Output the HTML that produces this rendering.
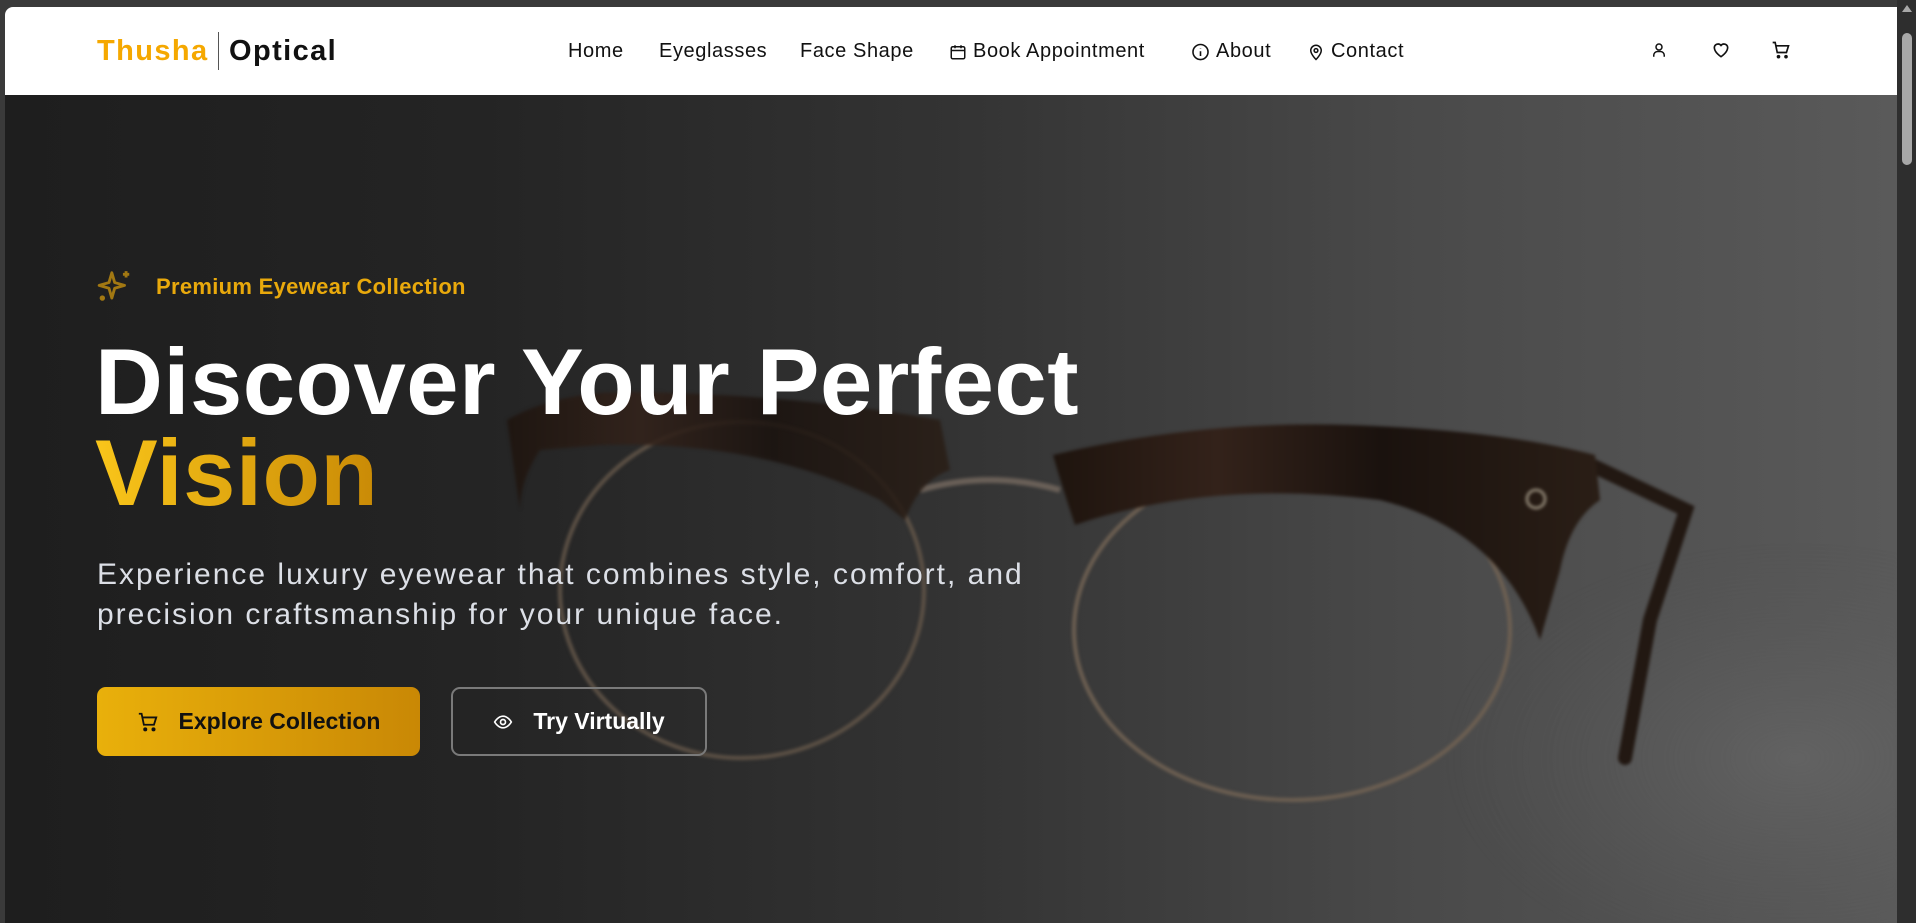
<!DOCTYPE html>
<html><head><meta charset="utf-8"><style>
*{margin:0;padding:0;box-sizing:border-box}
html,body{width:1916px;height:923px;overflow:hidden;background:#2a2a2a;font-family:"Liberation Sans",sans-serif}
.frame{position:absolute;left:0;top:0;width:1916px;height:923px;background:#3a3a3a}
.hero{position:absolute;left:5px;top:95px;width:1892px;height:828px;background:linear-gradient(90deg,#1e1e1e 0%,#242424 25%,#333 50%,#4a4a4a 75%,#5a5a5a 100%);overflow:hidden}
.nav{position:absolute;left:5px;top:7px;width:1892px;height:88px;background:#fff;border-radius:8px 0 0 0}
.logo{position:absolute;left:92px;top:25px;font-size:29px;font-weight:bold;letter-spacing:1.4px;display:flex;align-items:center}
.logo .a{color:#f5a800}.logo .sep{width:1.5px;height:38px;background:#555;margin:0 10px 0 9px}.logo .b{color:#111}
.links{position:absolute;top:33px;left:0;font-size:20px;color:#111;letter-spacing:0.6px}
.links span{position:absolute;white-space:nowrap}
.links svg{position:absolute;top:2px}
.ic{position:absolute;top:33px}
.sb{position:absolute;right:0;top:0;width:19px;height:923px;background:#2e2e2e}
.sb .th{position:absolute;left:5px;top:33px;width:10px;height:132px;background:#a8a8a8;border-radius:5px}
.tag{position:absolute;left:156px;top:274px;font-size:22px;font-weight:bold;color:#e9a90c;letter-spacing:0.3px}
h1{position:absolute;left:95px;top:336px;font-size:94px;line-height:91px;font-weight:bold;color:#fff;letter-spacing:0.5px;white-space:nowrap}
h1 .v{background:linear-gradient(90deg,#f9c51a,#c98a06);-webkit-background-clip:text;background-clip:text;color:transparent}
p.sub{position:absolute;left:97px;top:555px;font-size:30px;line-height:40px;color:#dcdfe6;width:930px;letter-spacing:2px}
.btn{position:absolute;top:687px;height:69px;border-radius:9px;display:flex;align-items:center;justify-content:center;font-size:23px;font-weight:bold}
.b1{left:97px;width:323px;background:linear-gradient(90deg,#e9b00b,#c98805);color:#111}
.b2{left:451px;width:256px;border:2px solid #7a7a7a;color:#fff}
</style></head><body>
<div class="frame"></div>
<div class="hero">
<svg width="1892" height="828" viewBox="5 95 1892 828" style="position:absolute;left:0;top:0;filter:blur(1.5px)">
<defs><linearGradient id="tort" x1="0" x2="1"><stop offset="0" stop-color="#1e140e"/><stop offset=".3" stop-color="#33221a"/><stop offset=".6" stop-color="#1a120e"/><stop offset="1" stop-color="#2a1e16"/></linearGradient>
<radialGradient id="lt" cx="0.85" cy="0.6" r="0.5"><stop offset="0" stop-color="#6a6a6a" stop-opacity=".6"/><stop offset="1" stop-color="#5a5a5a" stop-opacity="0"/></radialGradient></defs>
<rect x="1200" y="500" width="700" height="430" fill="url(#lt)"/>
<path d="M1589 464 L1686 510 L1650 620 L1625 758" stroke="#221812" stroke-width="14" fill="none" stroke-linecap="round"/>
<ellipse cx="742" cy="590" rx="182" ry="168" fill="none" stroke="#5e5246" stroke-width="4"/>
<ellipse cx="1292" cy="630" rx="218" ry="170" fill="none" stroke="#6e6052" stroke-width="4"/>
<path d="M920 490 Q990 470 1060 490" stroke="#6a6058" stroke-width="6" fill="none"/>
<path d="M507 420 Q560 390 640 392 Q800 395 940 420 L950 470 Q920 480 905 520 L880 500 Q760 440 600 445 L540 450 Q520 480 520 510 Z" fill="url(#tort)" opacity=".85"/>
<path d="M1053 455 Q1200 420 1350 425 Q1500 430 1595 455 L1600 500 Q1570 520 1560 570 L1540 640 Q1500 530 1380 500 Q1220 480 1090 520 L1075 525 Q1060 480 1053 455 Z" fill="url(#tort)"/>
<circle cx="1536" cy="499" r="9" fill="none" stroke="#8a8070" stroke-width="3"/>
</svg>
</div>
<div class="nav">
<div class="logo"><span class="a">Thusha</span><span class="sep"></span><span class="b">Optical</span></div>
<div class="links">
<span style="left:563px">Home</span>
<span style="left:654px">Eyeglasses</span>
<span style="left:795px">Face Shape</span>
<svg style="left:944px" width="18" height="20" viewBox="0 0 24 24" fill="none" stroke="#111" stroke-width="2"><rect x="3" y="5" width="18" height="16" rx="2"/><path d="M3 10h18M8 3v4M16 3v4"/></svg>
<span style="left:968px">Book Appointment</span>
<svg style="left:1186px" width="19" height="20" viewBox="0 0 24 24" fill="none" stroke="#111" stroke-width="2"><circle cx="12" cy="12" r="9.5"/><path d="M12 11v6M12 7.5v.5"/></svg>
<span style="left:1211px">About</span>
<svg style="left:1302px" width="18" height="20" viewBox="0 0 24 24" fill="none" stroke="#111" stroke-width="2"><path d="M12 22s7-7 7-12a7 7 0 0 0-14 0c0 5 7 12 7 12z"/><circle cx="12" cy="10" r="2.5"/></svg>
<span style="left:1326px">Contact</span>
</div>
<svg class="ic" style="left:1645px" width="18" height="20" viewBox="0 0 24 24" fill="none" stroke="#111" stroke-width="2"><circle cx="12" cy="8" r="4"/><path d="M5 21v-2a5 5 0 0 1 5-5h4a5 5 0 0 1 5 5v2"/></svg>
<svg class="ic" style="left:1706px" width="20" height="20" viewBox="0 0 24 24" fill="none" stroke="#111" stroke-width="2"><path d="M12 20s-8-5-8-11a4.5 4.5 0 0 1 8-2.5A4.5 4.5 0 0 1 20 9c0 6-8 11-8 11z"/></svg>
<svg class="ic" style="left:1766px" width="20" height="20" viewBox="0 0 24 24" fill="none" stroke="#111" stroke-width="2"><path d="M2 3h3l2.5 12h11L21 7H6.5"/><circle cx="9" cy="20" r="1.2" fill="#111"/><circle cx="18" cy="20" r="1.2" fill="#111"/></svg>
</div>
<svg style="position:absolute;left:96px;top:268px" width="38" height="38" viewBox="0 0 24 24" fill="none" stroke="#a27812" stroke-width="1.8" stroke-linejoin="round"><path d="M10 3 L11.8 9.2 L18 11 L11.8 12.8 L10 19 L8.2 12.8 L2 11 L8.2 9.2 Z"/><path d="M19 2v4M17 4h4"/><circle cx="4" cy="19" r=".8" fill="#a27812"/></svg>
<div class="tag">Premium Eyewear Collection</div>
<h1>Discover Your Perfect<br><span class="v">Vision</span></h1>
<p class="sub">Experience luxury eyewear that combines style, comfort, and precision craftsmanship for your unique face.</p>
<div class="btn b1"><svg width="22" height="22" viewBox="0 0 24 24" fill="none" stroke="#111" stroke-width="2" style="margin-right:20px"><path d="M2 3h3l2.5 12h11L21 7H6.5"/><circle cx="9" cy="20" r="1.2" fill="#111"/><circle cx="18" cy="20" r="1.2" fill="#111"/></svg>Explore Collection</div>
<div class="btn b2"><svg width="20" height="20" viewBox="0 0 24 24" fill="none" stroke="#fff" stroke-width="2" style="margin-right:20px"><path d="M2 12s4-7 10-7 10 7 10 7-4 7-10 7S2 12 2 12z"/><circle cx="12" cy="12" r="3"/></svg>Try Virtually</div>
<div class="sb"><div class="th"></div><div style="position:absolute;left:5px;top:5px;width:0;height:0;border-left:5px solid transparent;border-right:5px solid transparent;border-bottom:7px solid #a8a8a8"></div></div>
</body></html>
